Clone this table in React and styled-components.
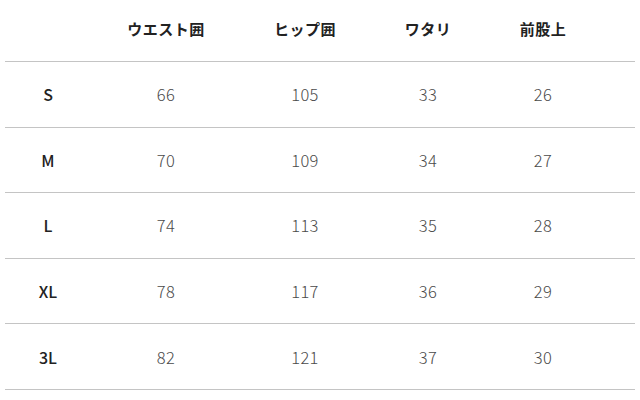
import React from 'react';
import styled, { createGlobalStyle } from 'styled-components';

const GlobalStyle = createGlobalStyle`
  html, body {
    margin: 0;
    padding: 0;
    background: #fff;
  }
  body {
    font-family: 'Noto Sans CJK JP', 'Noto Sans', sans-serif;
  }
`;

const Table = styled.div`
  padding: 0 5px;
  width: 630px;
`;

const Row = styled.div`
  display: grid;
  grid-template-columns: 86px 150px 128px 118px 112px 1fr;
  align-items: center;
  height: ${props => props.$head ? '61px' : '64.6px'};
  border-bottom: 1px solid #c4c4c4;
  box-sizing: content-box;
`;

const HeadCell = styled.div`
  text-align: center;
  font-size: 15px;
  font-weight: 700;
  letter-spacing: 0.5px;
  color: #222;
  padding-bottom: 4px;
`;

const SizeCell = styled.div`
  text-align: center;
  font-size: 16px;
  font-weight: 500;
  color: #222;
`;

const ValueCell = styled.div`
  text-align: center;
  font-size: 16.5px;
  font-weight: 300;
  letter-spacing: 0.4px;
  color: #4a4a4a;
`;

const headers = ['ウエスト囲', 'ヒップ囲', 'ワタリ', '前股上'];

const rows = [
  ['S', 66, 105, 33, 26],
  ['M', 70, 109, 34, 27],
  ['L', 74, 113, 35, 28],
  ['XL', 78, 117, 36, 29],
  ['3L', 82, 121, 37, 30],
];

export default function App() {
  return (
    <>
      <GlobalStyle />
      <Table>
        <Row $head>
          <HeadCell />
          {headers.map(h => <HeadCell key={h}>{h}</HeadCell>)}
          <HeadCell />
        </Row>
        {rows.map(([size, ...values]) => (
          <Row key={size}>
            <SizeCell>{size}</SizeCell>
            {values.map((v, i) => <ValueCell key={i}>{v}</ValueCell>)}
            <ValueCell />
          </Row>
        ))}
      </Table>
    </>
  );
}
